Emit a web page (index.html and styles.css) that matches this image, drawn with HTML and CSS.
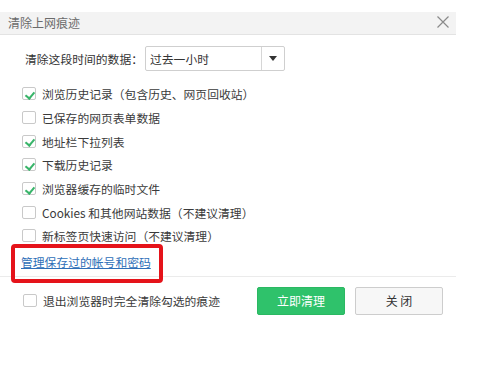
FILE: index.html
```html
<!DOCTYPE html>
<html lang="zh-CN">
<head>
<meta charset="utf-8">
<title>清除上网痕迹</title>
<link rel="stylesheet" href="styles.css">
</head>
<body>
<div class="dialog">
  <div class="titlebar">
    <span class="title">清除上网痕迹</span>
    <svg class="close" width="12" height="12" viewBox="0 0 12 12"><path d="M0.5 0.5 L11.5 11.5 M11.5 0.5 L0.5 11.5" stroke="#8a8a8a" stroke-width="1.2" fill="none"/></svg>
  </div>
  <div class="range">
    <span class="range-label">清除这段时间的数据：</span>
    <div class="select">
      <span class="select-value">过去一小时</span>
      <span class="select-arrow"><svg width="8" height="5" viewBox="0 0 8 5"><path d="M0 0 H8 L4 5 Z" fill="#333"/></svg></span>
    </div>
  </div>
  <ul class="options">
    <li class="opt"><span class="cb checked"></span>浏览历史记录（包含历史、网页回收站）</li>
    <li class="opt"><span class="cb"></span>已保存的网页表单数据</li>
    <li class="opt"><span class="cb checked"></span>地址栏下拉列表</li>
    <li class="opt"><span class="cb checked"></span>下载历史记录</li>
    <li class="opt"><span class="cb checked"></span>浏览器缓存的临时文件</li>
    <li class="opt"><span class="cb"></span>Cookies 和其他网站数据（不建议清理）</li>
    <li class="opt"><span class="cb"></span>新标签页快速访问（不建议清理）</li>
  </ul>
  <div class="link-row">
    <a class="manage-link" href="#">管理保存过的帐号和密码</a>
    <span class="highlight"></span>
  </div>
  <div class="footer">
    <label class="exit-opt"><span class="cb"></span>退出浏览器时完全清除勾选的痕迹</label>
    <div class="buttons">
      <button class="btn btn-primary">立即清理</button>
      <button class="btn btn-default">关 闭</button>
    </div>
  </div>
</div>
</body>
</html>
```
FILE: styles.css
```css
* { box-sizing: border-box; }
html, body { margin: 0; padding: 0; background: #ffffff; }
body {
  font-family: "Noto Sans CJK SC", "Microsoft YaHei", sans-serif;
  font-size: 11.8px;
  color: #3a3a3a;
  width: 500px;
  height: 373px;
  overflow: hidden;
}
.dialog {
  width: 456px;
  padding-top: 12px;
}
.titlebar {
  height: 23px;
  background: #f3f3f3;
  border-bottom: 1px solid #e3e3e3;
  display: flex;
  align-items: center;
  justify-content: space-between;
  padding: 0 7px 2px 8px;
}
.title { font-size: 12px; color: #6b6b6b; }
.close { display: block; }
.range {
  display: flex;
  align-items: center;
  padding-left: 25px;
  margin-top: 11px;
  height: 25px;
}
.range-label { width: 120px; font-size: 11.8px; color: #333; }
.select {
  width: 140px;
  height: 25px;
  border: 1px solid #cfcfcf;
  border-radius: 2px;
  display: flex;
  align-items: center;
}
.select-value { flex: 1; padding-left: 4px; font-size: 11.8px; color: #333; }
.select-arrow {
  width: 23px;
  height: 100%;
  border-left: 1px solid #d6d6d6;
  display: flex;
  align-items: center;
  justify-content: center;
}
.select-arrow svg { display: block; }
.options {
  list-style: none;
  margin: 11px 0 0;
  padding: 0 0 0 22px;
}
.opt {
  height: 23.7px;
  display: flex;
  align-items: center;
  gap: 6px;
  color: #3a3a3a;
}
.cb {
  width: 14px;
  height: 13px;
  border: 1px solid #c9c9c9;
  border-radius: 2px;
  background: #fff;
  position: relative;
  flex: none;
}
.cb.checked::after {
  content: "";
  position: absolute;
  left: 3.5px;
  top: 1.5px;
  width: 4px;
  height: 7px;
  border-right: 2px solid #39b56a;
  border-bottom: 2px solid #39b56a;
  transform: rotate(40deg);
}
.link-row {
  position: relative;
  height: 40px;
  display: flex;
  align-items: center;
  padding-left: 21px;
  margin-top: -6px;
}
.manage-link {
  color: #2f6fb8;
  text-decoration: underline;
  font-size: 11.8px;
}
.highlight {
  position: absolute;
  left: 11px;
  top: 2px;
  width: 152px;
  height: 39px;
  border: 4px solid #e5131a;
  border-radius: 4px;
}
.footer {
  border-top: 1px solid #ebebeb;
  margin-top: -6px;
  display: flex;
  align-items: center;
  justify-content: space-between;
  padding: 10px 13px 0 23px;
}
.exit-opt {
  display: flex;
  align-items: center;
  gap: 6px;
  color: #3a3a3a;
}
.buttons { display: flex; gap: 10px; }
.btn {
  width: 88px;
  height: 28px;
  border-radius: 2px;
  font-family: inherit;
  font-size: 12px;
  padding: 0;
}
.btn-primary {
  background: #2fc26b;
  border: 1px solid #2bb862;
  color: #ffffff;
}
.btn-default {
  background: #f7f7f7;
  border: 1px solid #cdcdcd;
  color: #333;
}
```
